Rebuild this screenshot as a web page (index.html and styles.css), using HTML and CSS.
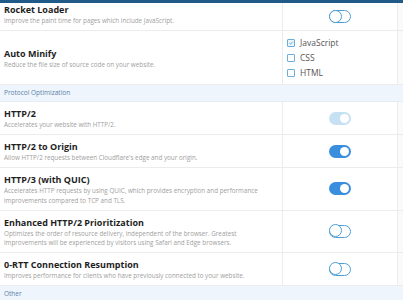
FILE: index.html
```html
<!DOCTYPE html>
<html lang="en">
	<head>
		<meta charset="UTF-8" />
		<title>Speed Settings</title>
		<link rel="stylesheet" href="styles.css">
	</head>
	<body>
		<div class="topbar"></div>

		<div class="settings">
			<div class="row first">
				<div class="info">
					<div class="title">Rocket Loader</div>
					<div class="desc">Improve the paint time for pages which include JavaScript.</div>
				</div>
				<div class="control"><span class="toggle"></span></div>
				<div class="gutter"></div>
			</div>

			<div class="row tall">
				<div class="info">
					<div class="title">Auto Minify</div>
					<div class="desc">Reduce the file size of source code on your website.</div>
				</div>
				<div class="control checks">
					<label class="check"><span class="box checked"><svg viewBox="0 0 8 8" width="8" height="8"><path d="M1.8 4.1 L3.4 5.6 L6.2 2.4" fill="none" stroke="#3f93cf" stroke-width="1"/></svg></span>JavaScript</label>
					<label class="check"><span class="box"></span>CSS</label>
					<label class="check"><span class="box"></span>HTML</label>
				</div>
				<div class="gutter"></div>
			</div>

			<div class="section">Protocol Optimization</div>

			<div class="row">
				<div class="info">
					<div class="title">HTTP/2</div>
					<div class="desc">Accelerates your website with HTTP/2.</div>
				</div>
				<div class="control"><span class="toggle on locked"></span></div>
				<div class="gutter"></div>
			</div>

			<div class="row">
				<div class="info">
					<div class="title">HTTP/2 to Origin</div>
					<div class="desc">Allow HTTP/2 requests between Cloudflare's edge and your origin.</div>
				</div>
				<div class="control"><span class="toggle on"></span></div>
				<div class="gutter"></div>
			</div>

			<div class="row">
				<div class="info">
					<div class="title">HTTP/3 (with QUIC)</div>
					<div class="desc">Accelerates HTTP requests by using QUIC, which provides encryption and performance improvements compared to TCP and TLS.</div>
				</div>
				<div class="control"><span class="toggle on"></span></div>
				<div class="gutter"></div>
			</div>

			<div class="row">
				<div class="info">
					<div class="title">Enhanced HTTP/2 Prioritization</div>
					<div class="desc">Optimizes the order of resource delivery, independent of the browser. Greatest improvements will be experienced by visitors using Safari and Edge browsers.</div>
				</div>
				<div class="control"><span class="toggle"></span></div>
				<div class="gutter"></div>
			</div>

			<div class="row">
				<div class="info">
					<div class="title">0-RTT Connection Resumption</div>
					<div class="desc">Improves performance for clients who have previously connected to your website.</div>
				</div>
				<div class="control"><span class="toggle"></span></div>
				<div class="gutter"></div>
			</div>

			<div class="section">Other</div>
		</div>
	</body>
</html>
```

FILE: styles.css
```css
body {
	font-family: "Open Sans", "Noto Sans", sans-serif;
	background-color: #fff;
	margin: 0;
	overflow: hidden;
}
.topbar {
	height: 3px;
	background-color: #1f5a88;
}

.settings {
	display: flex;
	flex-direction: column;
}
.row {
	display: grid;
	grid-template-columns: 282px 116px 1fr;
	border-bottom: 1px solid #ececec;
}
.row .info {
	padding: 6px 12px 4.5px 4px;
}
.row.first .info {
	padding-top: 1px;
}
.row.tall .info {
	align-self: center;
}
.title {
	font-size: 9px;
	font-weight: 700;
	line-height: 12px;
	color: #1e1e1e;
}
.desc {
	font-size: 6.3px;
	line-height: 9.5px;
	color: #a0a0a0;
}
.control {
	border-left: 1px solid #ececec;
	border-right: 1px solid #ececec;
	display: flex;
	align-items: center;
	justify-content: center;
}
.gutter {
	background-color: #fafafa;
}

/* Toggles */
.toggle {
	position: relative;
	box-sizing: border-box;
	width: 22px;
	height: 13px;
	border-radius: 7px;
	border: 1.5px solid #4d9fd6;
	background: #fff;
}
.toggle::after {
	content: "";
	position: absolute;
	box-sizing: border-box;
	top: -1.5px;
	left: -1.5px;
	width: 13px;
	height: 13px;
	border-radius: 50%;
	border: 1.5px solid #4d9fd6;
	background: #fff;
}
.toggle.on {
	border: none;
	background: #3a8ede;
}
.toggle.on::after {
	top: 2px;
	left: auto;
	right: 2px;
	width: 9px;
	height: 9px;
	border: none;
}
.toggle.locked {
	background: #c7e1f4;
}

/* Checkboxes */
.checks {
	flex-direction: column;
	align-items: flex-start;
	padding: 6px 0 6px 4px;
	justify-content: center;
	gap: 4px;
}
.check {
	display: flex;
	align-items: center;
	gap: 5px;
	font-size: 8.5px;
	line-height: 11px;
	color: #555;
}
.box {
	box-sizing: border-box;
	width: 8px;
	height: 8px;
	border: 1px solid #6aafdc;
	border-radius: 1px;
	display: flex;
	align-items: center;
	justify-content: center;
}
.box.checked {
	background: #eaf4fb;
}

.section {
	height: 16px;
	line-height: 16px;
	padding-left: 4px;
	font-size: 6.5px;
	color: #5b82a8;
	background-color: #eef5fc;
	border-bottom: 1px solid #e3edf7;
}
```
